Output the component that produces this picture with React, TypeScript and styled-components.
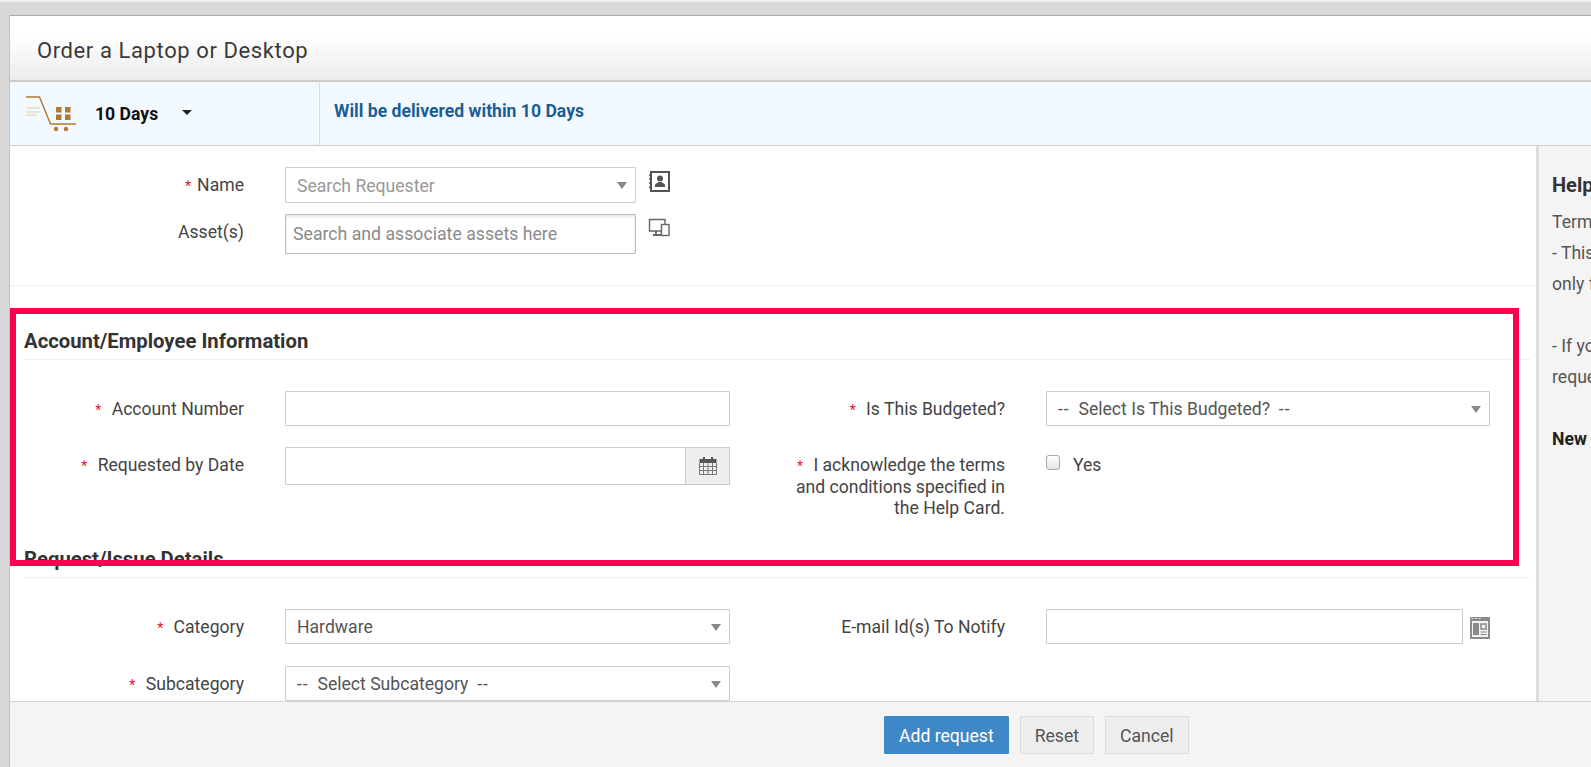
import React from 'react';
import styled, { createGlobalStyle } from 'styled-components';

const GlobalStyle = createGlobalStyle`
  html, body {
    margin: 0;
    padding: 0;
    height: 100%;
    overflow: hidden;
  }
  body {
    font-family: 'Roboto', 'Liberation Sans', sans-serif;
    color: #444;
  }
  * {
    box-sizing: border-box;
  }
`;

const Page = styled.div`
  position: relative;
  width: 1591px;
  height: 767px;
  overflow: hidden;
  background: #d8d8d8;
  border-top: 2px solid #eee;
  padding: 13px 0 0 9px;
`;

const Modal = styled.div`
  display: flex;
  flex-direction: column;
  width: 1640px;
  height: 752px;
  background: #fff;
  border-top: 1px solid #aaa;
  border-left: 1px solid #c4c4c4;
`;

const Header = styled.header`
  flex: none;
  display: flex;
  align-items: center;
  height: 66px;
  padding: 4px 0 0 27px;
  background: linear-gradient(#fff 30%, #ececec);
  border-bottom: 2px solid #ccc;
`;

const Title = styled.h1`
  margin: 0;
  font-size: 22px;
  font-weight: 400;
  letter-spacing: 0.6px;
  color: #3a3a3a;
`;

const SlaBar = styled.div`
  flex: none;
  display: flex;
  height: 64px;
  background: #f3faff;
  border-bottom: 1px solid #ccc;
`;

const SlaPicker = styled.div`
  display: flex;
  align-items: center;
  width: 310px;
  padding: 0 0 0 15px;
  border-right: 1px solid #d8dde0;
`;

const SlaValue = styled.span`
  margin-left: 18px;
  font-size: 17.6px;
  font-weight: 700;
  color: #111;
`;

const Caret = styled.span`
  margin: 0 0 2px 24px;
  border-top: 5px solid #222;
  border-left: 5.5px solid transparent;
  border-right: 5.5px solid transparent;
`;

const SlaText = styled.div`
  padding: 0 0 5px 14px;
  align-self: center;
  font-size: 17.6px;
  font-weight: 700;
  color: #1b5e96;
`;

const Body = styled.div`
  flex: none;
  display: flex;
  height: 555px;
  overflow: hidden;
`;

const FormColumn = styled.div`
  flex: none;
  width: 1526px;
  height: 555px;
  overflow: hidden;
`;

const TopForm = styled.div`
  height: 140px;
  padding: 21px 0 0 0;
  border-bottom: 1px solid #eee;
`;

const TopRow = styled.div<{ $height: number; $gap?: number }>`
  display: flex;
  height: ${p => p.$height}px;
  margin-bottom: ${p => p.$gap ?? 0}px;
`;

const Label = styled.label`
  flex: none;
  width: 275px;
  padding: 8px 41px 0 0;
  font-size: 17.6px;
  line-height: 21px;
  text-align: right;
  color: #444;
`;

const Star = styled.span`
  margin-right: 6px;
  font-size: 14px;
  color: #f01030;
`;

const TextField = styled.div<{ $shadow?: boolean }>`
  flex: 1;
  min-width: 0;
  height: 100%;
  display: flex;
  align-items: center;
  padding: 0 0 1px 7px;
  background: #fff;
  border: 1px solid #ccc;
  border-radius: 1px;
  font-size: 17.7px;
  color: #8a8a8a;
  ${p => p.$shadow && 'border-color: #bbb; box-shadow: inset 0 2px 3px rgba(0, 0, 0, 0.1);'}
`;

const SelectBox = styled.div<{ $muted?: boolean }>`
  position: relative;
  flex: 1;
  height: 100%;
  display: flex;
  align-items: center;
  padding: 1px 0 0 11px;
  background: #fff;
  border: 1px solid #ccc;
  border-radius: 1px;
  font-size: 17.6px;
  white-space: pre;
  color: ${p => (p.$muted ? '#999' : '#555')};

  &::after {
    content: '';
    position: absolute;
    right: 8px;
    top: 14px;
    border-top: 7px solid #888;
    border-left: 5px solid transparent;
    border-right: 5px solid transparent;
  }
`;

const Dash = styled.span`
  letter-spacing: 1px;
`;

const FieldWithIcon = styled.div<{ $gap: number; $width?: string }>`
  flex: none;
  width: ${p => p.$width ?? '385px'};
  display: flex;
  align-items: flex-start;
  height: 100%;
  gap: ${p => p.$gap}px;
`;

const FieldInner = styled.div`
  flex: 1;
  height: 100%;
  display: flex;
`;

const IconSlot = styled.span<{ $top: number }>`
  flex: none;
  display: flex;
  padding-top: ${p => p.$top}px;
`;

const Section = styled.section`
  padding: 0 6px 0 14px;
`;

const SectionTitle = styled.h2<{ $top: number }>`
  margin: ${p => p.$top}px 0 0;
  height: 30px;
  font-size: 20.3px;
  line-height: 22px;
  font-weight: 700;
  color: #333;
  border-bottom: 1px solid #eee;
`;

const FieldGrid = styled.div<{ $top: number; $rowGap: number }>`
  display: grid;
  grid-template-columns: 261px 445px 316px 444px;
  row-gap: ${p => p.$rowGap}px;
  margin-top: ${p => p.$top}px;
`;

const Cell = styled.div<{ $height: number }>`
  display: flex;
  height: ${p => p.$height}px;
`;

const GridLabel = styled(Label)`
  width: 100%;
`;

const CalendarAddon = styled.span`
  flex: none;
  width: 45px;
  display: flex;
  align-items: center;
  justify-content: center;
  background: #eee;
  border: 1px solid #ccc;
  margin-left: -1px;
`;

const CheckRow = styled.div`
  display: flex;
  align-items: flex-start;
  gap: 13px;
  font-size: 17.6px;
  line-height: 21px;
  padding-top: 8px;
  color: #444;
`;

const CheckBox = styled.span`
  width: 14px;
  height: 15px;
  background: linear-gradient(#fff, #e4e4e4);
  border: 1px solid #a8a8a8;
  border-radius: 3px;
`;

const HelpPanel = styled.aside`
  flex: none;
  width: 114px;
  height: 555px;
  padding: 28px 0 0 13px;
  background: #f4f4f4;
  border-left: 3px solid #ddd;
  font-size: 17.6px;
  line-height: 31px;
  color: #555;
  white-space: nowrap;
  overflow: hidden;
`;

const HelpTitle = styled.div`
  height: 33px;
  font-size: 20px;
  line-height: 22px;
  font-weight: 700;
  color: #333;
`;

const HelpLine = styled.div`
  height: 31px;
`;

const HelpStrong = styled.div`
  margin-top: 31px;
  font-weight: 700;
  color: #222;
`;

const Footer = styled.footer`
  flex: 1;
  display: flex;
  gap: 11px;
  padding: 14px 0 0 874px;
  background: #f4f4f4;
  border-top: 1px solid #d4d4d4;
`;

const Button = styled.button<{ $primary?: boolean }>`
  height: 38px;
  padding: 1px 14px 0;
  font-family: inherit;
  font-size: 17.6px;
  border-radius: 1px;
  color: ${p => (p.$primary ? '#fff' : '#555')};
  background: ${p => (p.$primary ? '#3f88c8' : '#eee')};
  border: 1px solid ${p => (p.$primary ? '#3f88c8' : '#ddd')};
`;

// annotation drawn over the screenshot
const Highlight = styled.div`
  position: absolute;
  left: 10px;
  top: 306px;
  width: 1509px;
  height: 258px;
  border: 6.5px solid #ff0050;
  pointer-events: none;
`;

const CartIcon = () => (
  <svg width="52" height="40" viewBox="0 0 52 40" fill="none">
    <path d="M1 3h13.500L25.500 30H51" stroke="#b07a30" strokeWidth="1.400" />
    <path d="M1 14h14M1 18h14M1 21h11" stroke="#dcc9a8" strokeWidth="1.100" />
    <rect x="31" y="13" width="5.500" height="5.500" fill="#b07a30" />
    <rect x="40" y="13" width="5.500" height="5.500" fill="#b07a30" />
    <rect x="31" y="20.500" width="5.500" height="5.500" fill="#b07a30" />
    <rect x="40" y="20.500" width="5.500" height="5.500" fill="#b07a30" />
    <circle cx="31" cy="35" r="2.200" fill="#b07a30" />
    <circle cx="41" cy="35" r="2.200" fill="#b07a30" />
  </svg>
);

const ContactIcon = () => (
  <svg width="22" height="21" viewBox="0 0 22 21" fill="none">
    <rect x="3" y="1" width="18" height="19" stroke="#555" strokeWidth="2" />
    <path d="M1 4h3M1 8h3M1 12h3M1 16h3" stroke="#555" strokeWidth="1.500" />
    <circle cx="12" cy="7.500" r="3" fill="#555" />
    <path d="M7 16v-2c0-1.500 3-2 3.500-3h3c.5 1 3.500 1.500 3.500 3v2z" fill="#555" />
  </svg>
);

const DevicesIcon = () => (
  <svg width="22" height="20" viewBox="0 0 22 20" fill="none">
    <path d="M13 13H1.500V1.500H17V6" stroke="#666" strokeWidth="1.400" />
    <rect x="13.500" y="6.500" width="7.500" height="11" stroke="#666" strokeWidth="1.400" />
    <path d="M8 13v3M5 17h8" stroke="#666" strokeWidth="1.800" />
  </svg>
);

const CalendarIcon = () => (
  <svg width="18" height="18" viewBox="0 0 18 18" fill="none">
    <rect x="0.500" y="2" width="17" height="4" fill="#555" />
    <rect x="4" y="0" width="2" height="3" fill="#555" />
    <rect x="12" y="0" width="2" height="3" fill="#555" />
    <path
      d="M.5 6v11.500h17V6M.5 9.500h17M.5 13.500h17M4.500 6v11.500M9 6v11.500M13.500 6v11.500"
      stroke="#777"
      strokeWidth="1"
    />
  </svg>
);

const AddressBookIcon = () => (
  <svg width="20" height="22" viewBox="0 0 20 22" fill="none">
    <rect x="0" y="0" width="20" height="22" rx="1" fill="#8a8a8a" />
    <path d="M1.500 1.500h2M5 1.500h2M8.500 1.500h2" stroke="#ddd" strokeWidth="1" />
    <rect x="2" y="4" width="16" height="16" fill="#f2f2f2" />
    <rect x="3" y="6" width="6" height="12" fill="#8a8a8a" />
    <rect x="11" y="7" width="5" height="5" stroke="#8a8a8a" strokeWidth="1.500" />
    <path d="M10.500 15h6M10.500 17.500h6" stroke="#8a8a8a" strokeWidth="1.200" />
  </svg>
);

const App: React.FC = () => {
  return (
    <Page>
      <GlobalStyle />
      <Modal>
        <Header>
          <Title>Order a Laptop or Desktop</Title>
        </Header>
        <SlaBar>
          <SlaPicker>
            <CartIcon />
            <SlaValue>10 Days</SlaValue>
            <Caret />
          </SlaPicker>
          <SlaText>Will be delivered within 10 Days</SlaText>
        </SlaBar>
        <Body>
          <FormColumn>
            <TopForm>
              <TopRow $height={36} $gap={11}>
                <Label>
                  <Star>*</Star>Name
                </Label>
                <FieldWithIcon $gap={12}>
                  <FieldInner>
                    <SelectBox $muted>Search Requester</SelectBox>
                  </FieldInner>
                  <IconSlot $top={4}>
                    <ContactIcon />
                  </IconSlot>
                </FieldWithIcon>
              </TopRow>
              <TopRow $height={40}>
                <Label>Asset(s)</Label>
                <FieldWithIcon $gap={12}>
                  <FieldInner>
                    <TextField $shadow>Search and associate assets here</TextField>
                  </FieldInner>
                  <IconSlot $top={4}>
                    <DevicesIcon />
                  </IconSlot>
                </FieldWithIcon>
              </TopRow>
            </TopForm>

            <Section>
              <SectionTitle $top={44}>Account/Employee Information</SectionTitle>
              <FieldGrid $top={31} $rowGap={21}>
                <GridLabel>
                  <Star>*</Star> Account Number
                </GridLabel>
                <Cell $height={35}>
                  <TextField />
                </Cell>
                <GridLabel>
                  <Star>*</Star> Is This Budgeted?
                </GridLabel>
                <Cell $height={35}>
                  <SelectBox>
                    <span>
                      <Dash>--</Dash>
                      {'  Select Is This Budgeted?  '}
                      <Dash>--</Dash>
                    </span>
                  </SelectBox>
                </Cell>
                <GridLabel>
                  <Star>*</Star> Requested by Date
                </GridLabel>
                <Cell $height={38}>
                  <TextField />
                  <CalendarAddon>
                    <CalendarIcon />
                  </CalendarAddon>
                </Cell>
                <GridLabel>
                  <Star>*</Star> I acknowledge the terms
                  <br />
                  and conditions specified in
                  <br />
                  the Help Card.
                </GridLabel>
                <CheckRow>
                  <CheckBox />
                  Yes
                </CheckRow>
              </FieldGrid>

              <SectionTitle $top={29}>Request/Issue Details</SectionTitle>
              <FieldGrid $top={31} $rowGap={22}>
                <GridLabel>
                  <Star>*</Star> Category
                </GridLabel>
                <Cell $height={35}>
                  <SelectBox>Hardware</SelectBox>
                </Cell>
                <GridLabel>E-mail Id(s) To Notify</GridLabel>
                <Cell $height={35}>
                  <FieldWithIcon $gap={7} $width="100%">
                    <FieldInner>
                      <TextField />
                    </FieldInner>
                    <IconSlot $top={8}>
                      <AddressBookIcon />
                    </IconSlot>
                  </FieldWithIcon>
                </Cell>
                <GridLabel>
                  <Star>*</Star> Subcategory
                </GridLabel>
                <Cell $height={35}>
                  <SelectBox>
                    <span>
                      <Dash>--</Dash>
                      {'  Select Subcategory  '}
                      <Dash>--</Dash>
                    </span>
                  </SelectBox>
                </Cell>
              </FieldGrid>
            </Section>
          </FormColumn>

          <HelpPanel>
            <HelpTitle>Help Card</HelpTitle>
            <HelpLine>Terms and conditions</HelpLine>
            <HelpLine>- This service is</HelpLine>
            <HelpLine>only for employees</HelpLine>
            <HelpLine />
            <HelpLine>- If you have</HelpLine>
            <HelpLine>request</HelpLine>
            <HelpStrong>New Request</HelpStrong>
          </HelpPanel>
        </Body>
        <Footer>
          <Button $primary>Add request</Button>
          <Button>Reset</Button>
          <Button>Cancel</Button>
        </Footer>
      </Modal>
      <Highlight />
    </Page>
  );
};

export default App;
